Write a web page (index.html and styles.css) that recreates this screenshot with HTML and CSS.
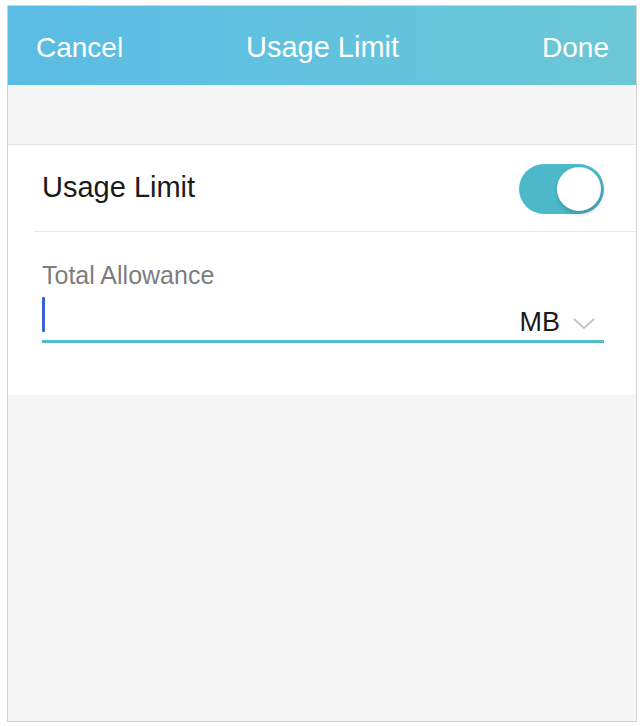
FILE: index.html
```html
<!DOCTYPE html>
<html>
<head>
<meta charset="utf-8">
<link rel="stylesheet" href="styles.css">
</head>
<body>
<div class="frame">
  <header class="navbar">
    <span class="nav-btn nav-left">Cancel</span>
    <span class="nav-title">Usage Limit</span>
    <span class="nav-btn nav-right">Done</span>
  </header>
  <div class="spacer"></div>
  <section class="card">
    <div class="row">
      <span class="row-label">Usage Limit</span>
      <span class="toggle"><span class="knob"></span></span>
    </div>
    <div class="sep"></div>
    <div class="field">
      <div class="field-label">Total Allowance</div>
      <div class="input-line">
        <span class="caret"></span>
        <span class="unit">MB</span>
        <svg class="chev" width="24" height="14" viewBox="0 0 24 14"><path d="M2 2 L12 11 L22 2" fill="none" stroke="#c4c4c4" stroke-width="2"/></svg>
      </div>
    </div>
  </section>
  <div class="rest"></div>
</div>
</body>
</html>
```
FILE: styles.css
```css
html, body { margin: 0; padding: 0; background: #ffffff; }
body { width: 640px; height: 726px; overflow: hidden; font-family: "Liberation Sans", Arial, sans-serif; }
.frame {
  margin: 5px 3px 0 7px;
  width: 628px;
  height: 715px;
  border: 1px solid #d2d2d2;
  display: flex;
  flex-direction: column;
  background: #f5f5f5;
}
.navbar {
  height: 79px;
  background: linear-gradient(90deg, #5bbce4 0%, #62c2de 50%, #6cc8d6 100%);
  display: grid;
  grid-template-columns: 1fr auto 1fr;
  align-items: center;
  padding: 4px 27px 0 28px;
  box-sizing: border-box;
  color: #ffffff;
  flex-shrink: 0;
}
.nav-btn { font-size: 28px; }
.nav-left { justify-self: start; }
.nav-right { justify-self: end; }
.nav-title { font-size: 29px; }
.spacer { height: 59px; background: #f5f5f5; border-bottom: 1px solid #e4e4e4; flex-shrink: 0; }
.card { background: #ffffff; height: 250px; flex-shrink: 0; }
.row {
  height: 86px;
  display: flex;
  align-items: center;
  justify-content: space-between;
  padding: 0 32px 0 34px;
}
.row-label { font-size: 29px; color: #1a1a1a; padding-bottom: 1px; }
.toggle {
  width: 85px;
  height: 50px;
  border-radius: 25px;
  background: #4cb8c9;
  position: relative;
  margin-top: 2px;
}
.knob {
  position: absolute;
  right: 3px;
  top: 3px;
  width: 44px;
  height: 44px;
  border-radius: 50%;
  background: #ffffff;
  box-shadow: 1px 3px 5px rgba(0,0,0,0.2);
}
.sep { height: 1px; background: #e8e8e8; margin-left: 26px; }
.field { padding: 29px 32px 0 34px; }
.field-label { font-size: 25px; color: #7d7d7d; line-height: 28px; }
.input-line {
  margin-top: 8px;
  height: 40px;
  border-bottom: 3px solid #4fbcc8;
  display: flex;
  align-items: flex-end;
  padding-bottom: 3px;
  box-sizing: content-box;
}
.caret { width: 3px; height: 35px; background: #3a5fd9; border-radius: 1px; align-self: flex-start; margin-top: 0; }
.unit { margin-left: auto; font-size: 27px; color: #1a1a1a; line-height: 30px; }
.chev { margin: 0 8px 6px 12px; }
.rest { flex: 1; background: #f5f5f5; }
```
